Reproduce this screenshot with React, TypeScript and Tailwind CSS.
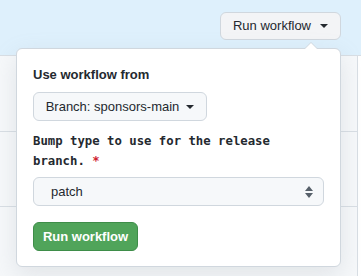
import React from "react";

function Caret() {
  return (
    <svg width="8" height="4" viewBox="0 0 8 4" className="fill-current">
      <path d="M0 0h8L4 4z" />
    </svg>
  );
}

export default function App() {
  const sans = { fontFamily: '"Liberation Sans", Arial, sans-serif' };
  return (
    <div className="relative h-[276px] w-[361px] overflow-hidden bg-white text-[#24292f]" style={sans}>
      {/* page behind */}
      <div className="flex h-[56px] justify-end border-b border-[#d8dee4] bg-[#def0fc] pr-[20px] pt-[12px]">
        <button className="flex h-[28px] w-[121px] items-center justify-center gap-[9px] rounded-[6px] border border-[#d0d7de] bg-[#f3f4f6] text-[13px]">
          Run workflow
          <Caret />
        </button>
      </div>
      <div className="mr-[3px] flex h-[276px] flex-col border-r border-[#d8dee4] bg-[#f6f8fa]">
        <div className="h-[76px] border-b border-[#d8dee4]" />
        <div className="h-[75px] border-b border-[#d8dee4]" />
      </div>

      {/* popover */}
      <div className="absolute left-[16px] top-[48px] w-[325px] rounded-[6px] border border-[#d0d7de] bg-white px-[16px] pb-[15px] pt-[16px] shadow-[0_8px_24px_rgba(140,149,159,0.2)]">
        <div className="absolute -top-[7px] right-[22px] h-0 w-0 border-x-[7px] border-b-[7px] border-x-transparent border-b-[#d0d7de]" />
        <div className="absolute -top-[6px] right-[23px] h-0 w-0 border-x-[6px] border-b-[6px] border-x-transparent border-b-white" />
        <div className="text-[13px] font-bold leading-[20px]">Use workflow from</div>
        <button className="mt-[7px] flex h-[29px] w-[174px] items-center justify-center gap-[7px] rounded-[6px] border border-[#d0d7de] bg-[#f6f8fa] text-[13px]">
          Branch: sponsors-main
          <Caret />
        </button>
        <div
          className="mt-[10px] text-[12.3px] font-bold leading-[20px]"
          style={{ fontFamily: '"DejaVu Sans Mono", "Liberation Mono", monospace' }}
        >
          Bump type to use for the release branch.{" "}
          <span className="text-[#cf222e]">*</span>
        </div>
        <div className="mt-[6px] flex h-[29px] items-center justify-between rounded-[6px] border border-[#d0d7de] bg-[#f6f8fa] pl-[17px] pr-[10px] text-[13px]">
          <span>patch</span>
          <svg width="8" height="12" viewBox="0 0 8 12" className="fill-[#57606a]">
            <path d="M0 5h8L4 0z M0 7h8L4 12z" />
          </svg>
        </div>
        <button className="mt-[16px] flex h-[29px] w-[105px] items-center justify-center rounded-[6px] border border-[#3e8d49] bg-[#50a45a] text-[13px] font-bold text-white">
          Run workflow
        </button>
      </div>
    </div>
  );
}
